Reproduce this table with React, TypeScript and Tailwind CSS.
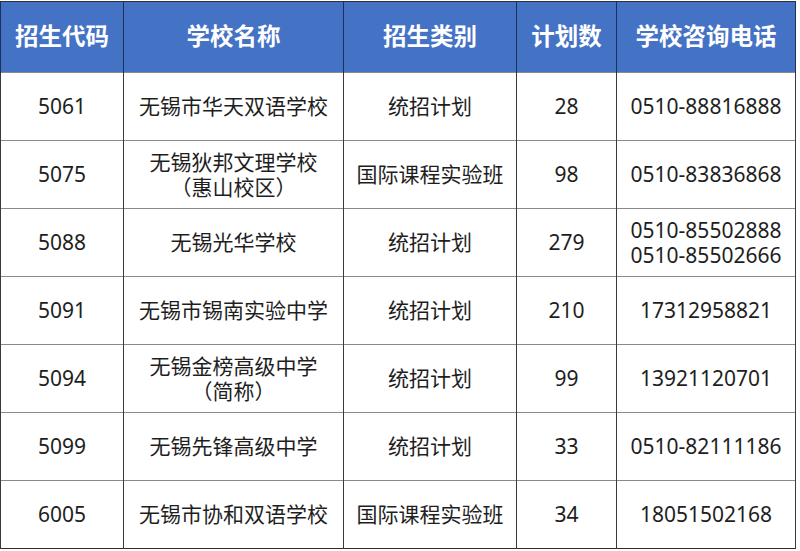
const rows: [string, string[], string, string, string[]][] = [
  ["5061", ["无锡市华天双语学校"], "统招计划", "28", ["0510-88816888"]],
  ["5075", ["无锡狄邦文理学校", "（惠山校区）"], "国际课程实验班", "98", ["0510-83836868"]],
  ["5088", ["无锡光华学校"], "统招计划", "279", ["0510-85502888", "0510-85502666"]],
  ["5091", ["无锡市锡南实验中学"], "统招计划", "210", ["17312958821"]],
  ["5094", ["无锡金榜高级中学", "（简称）"], "统招计划", "99", ["13921120701"]],
  ["5099", ["无锡先锋高级中学"], "统招计划", "33", ["0510-82111186"]],
  ["6005", ["无锡市协和双语学校"], "国际课程实验班", "34", ["18051502168"]],
];

const headers = ["招生代码", "学校名称", "招生类别", "计划数", "学校咨询电话"];
const widths = ["w-[123px]", "w-[220px]", "w-[173px]", "w-[100px]", "w-[179px]"];

export default function App() {
  return (
    <div
      className="w-[800px] h-[551px] bg-white pt-[1px]"
      style={{ fontFamily: '"Noto Sans", "Noto Sans CJK SC", sans-serif' }}
    >
      <table className="w-[795px] table-fixed border-collapse border border-[#2f2f2f]">
        <thead>
          <tr className="h-[71px] bg-[#4472c4]">
            {headers.map((h, i) => (
              <th
                key={h}
                className={`${widths[i]} border-x border-[#1f2f5a] text-white text-[23.5px] font-bold text-center`}
              >
                {h}
              </th>
            ))}
          </tr>
        </thead>
        <tbody className="text-[#1e1e1e] text-[21px]">
          {rows.map(([code, name, type, num, tel]) => (
            <tr key={code} className="h-[68px] border-t border-[#8a8a8a]">
              <td className="border-x border-[#3a3a3a] text-center">{code}</td>
              <td className="border-x border-[#3a3a3a] text-center leading-[25px]">
                {name.map((n) => (
                  <div key={n}>{n}</div>
                ))}
              </td>
              <td className="border-x border-[#3a3a3a] text-center">{type}</td>
              <td className="border-x border-[#3a3a3a] text-center">{num}</td>
              <td className="border-x border-[#3a3a3a] text-center leading-[25px]">
                {tel.map((t) => (
                  <div key={t}>{t}</div>
                ))}
              </td>
            </tr>
          ))}
        </tbody>
      </table>
    </div>
  );
}
